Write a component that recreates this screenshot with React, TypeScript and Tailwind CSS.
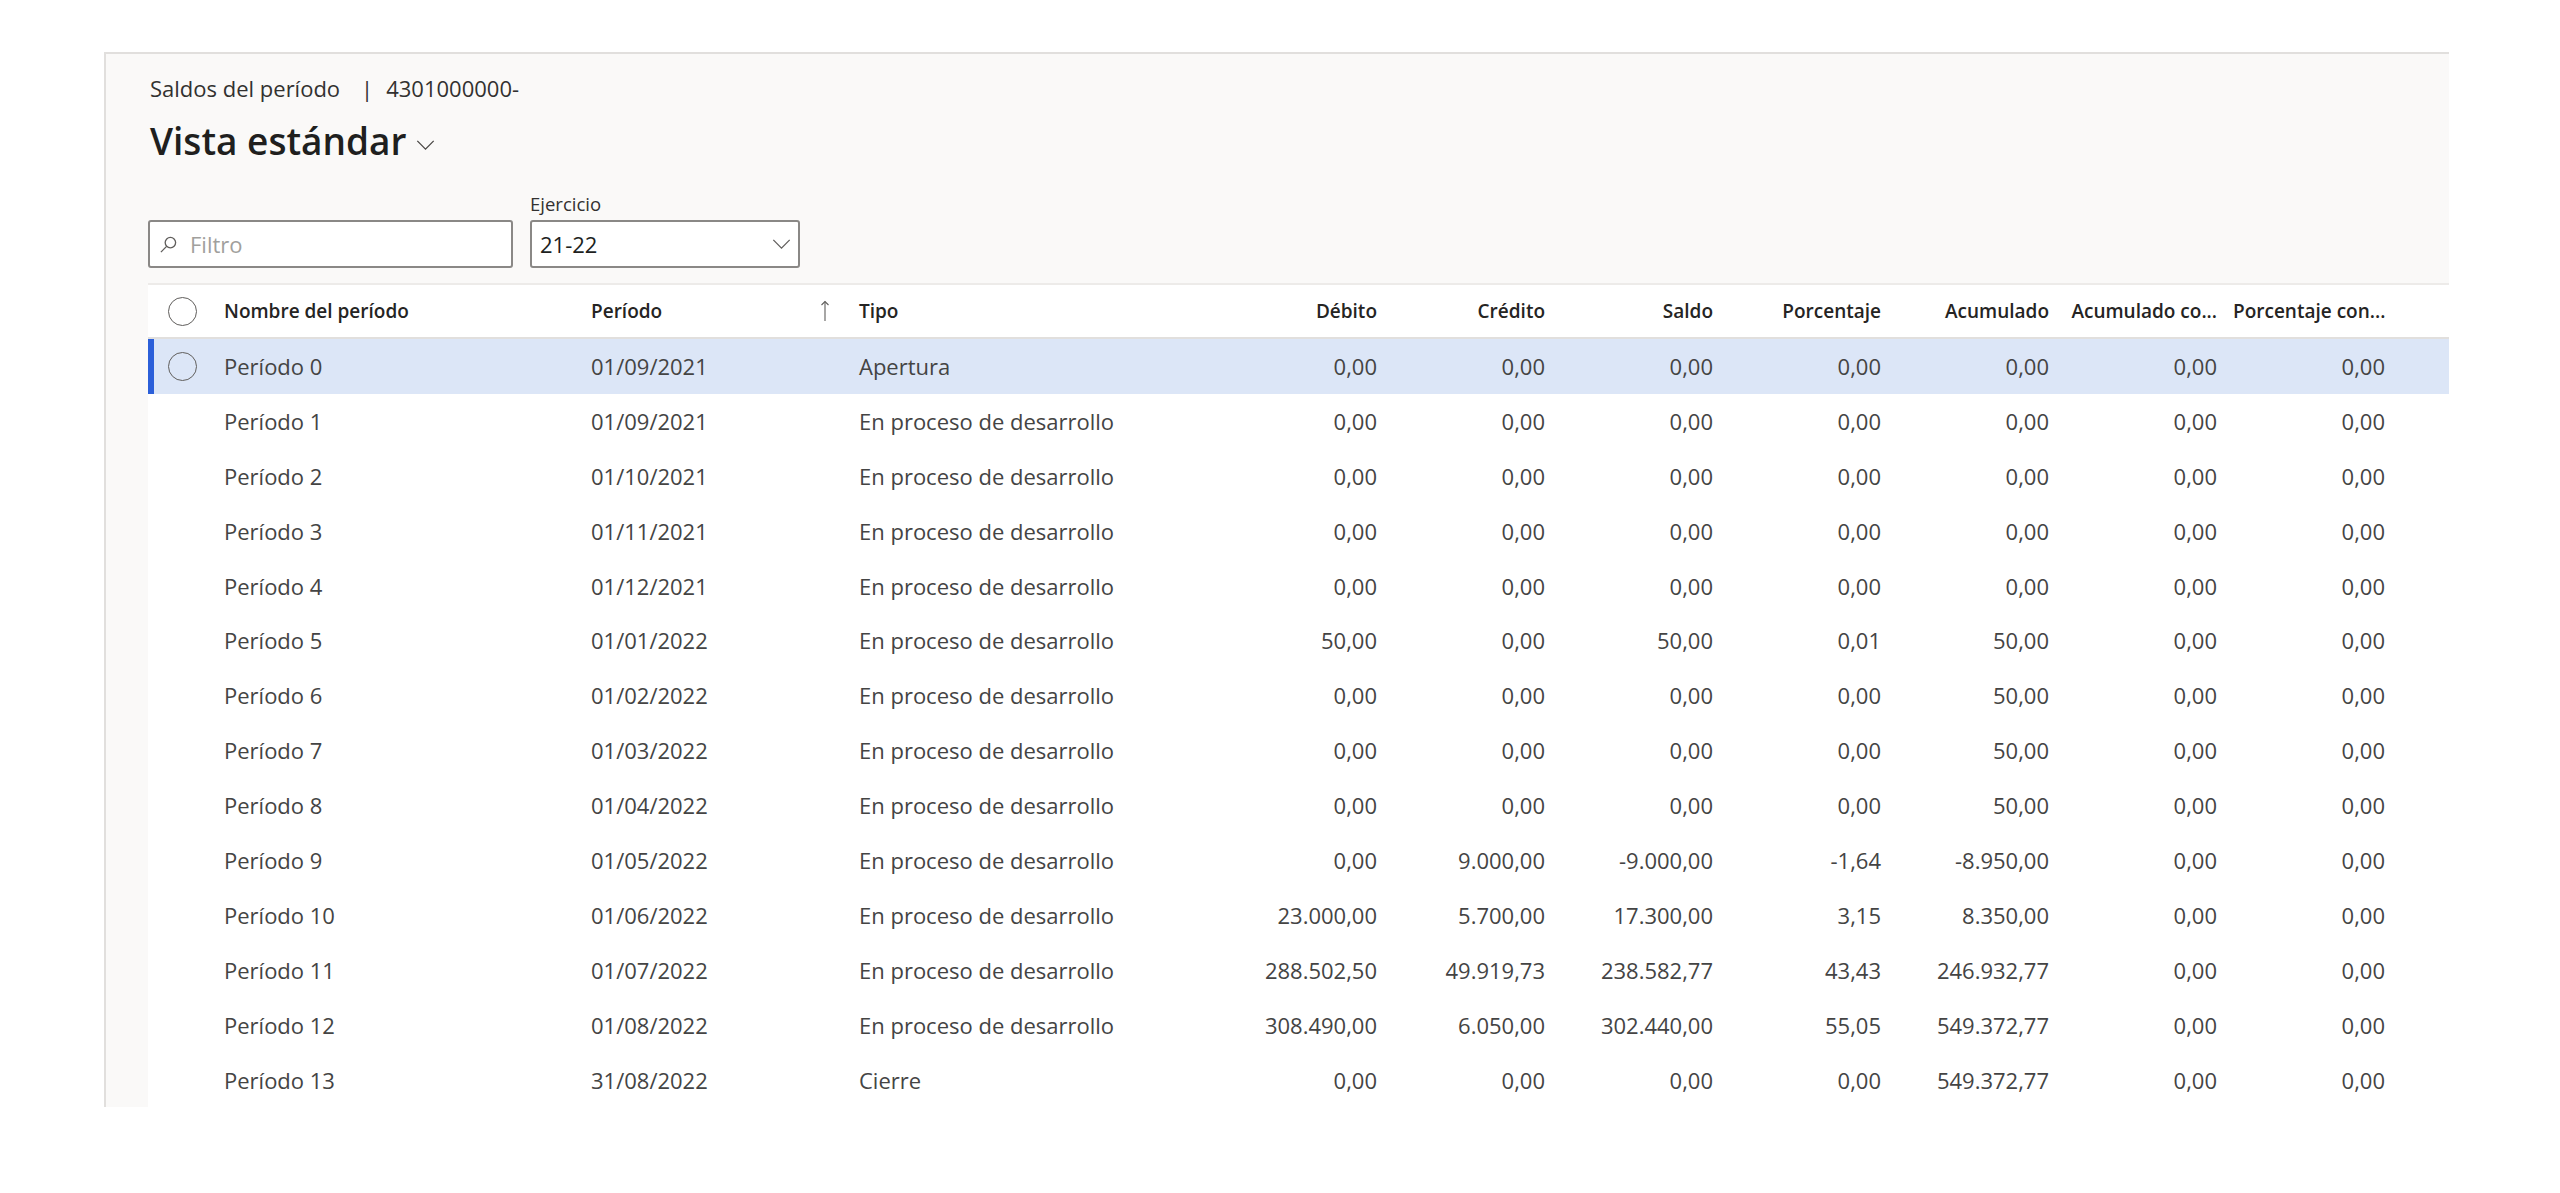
import React from "react";

type Row = {
  name: string;
  date: string;
  type: string;
  values: string[];
};

const Z = "0,00";

const rows: Row[] = [
  { name: "Período 0", date: "01/09/2021", type: "Apertura", values: [Z, Z, Z, Z, Z, Z, Z] },
  { name: "Período 1", date: "01/09/2021", type: "En proceso de desarrollo", values: [Z, Z, Z, Z, Z, Z, Z] },
  { name: "Período 2", date: "01/10/2021", type: "En proceso de desarrollo", values: [Z, Z, Z, Z, Z, Z, Z] },
  { name: "Período 3", date: "01/11/2021", type: "En proceso de desarrollo", values: [Z, Z, Z, Z, Z, Z, Z] },
  { name: "Período 4", date: "01/12/2021", type: "En proceso de desarrollo", values: [Z, Z, Z, Z, Z, Z, Z] },
  { name: "Período 5", date: "01/01/2022", type: "En proceso de desarrollo", values: ["50,00", Z, "50,00", "0,01", "50,00", Z, Z] },
  { name: "Período 6", date: "01/02/2022", type: "En proceso de desarrollo", values: [Z, Z, Z, Z, "50,00", Z, Z] },
  { name: "Período 7", date: "01/03/2022", type: "En proceso de desarrollo", values: [Z, Z, Z, Z, "50,00", Z, Z] },
  { name: "Período 8", date: "01/04/2022", type: "En proceso de desarrollo", values: [Z, Z, Z, Z, "50,00", Z, Z] },
  { name: "Período 9", date: "01/05/2022", type: "En proceso de desarrollo", values: [Z, "9.000,00", "-9.000,00", "-1,64", "-8.950,00", Z, Z] },
  { name: "Período 10", date: "01/06/2022", type: "En proceso de desarrollo", values: ["23.000,00", "5.700,00", "17.300,00", "3,15", "8.350,00", Z, Z] },
  { name: "Período 11", date: "01/07/2022", type: "En proceso de desarrollo", values: ["288.502,50", "49.919,73", "238.582,77", "43,43", "246.932,77", Z, Z] },
  { name: "Período 12", date: "01/08/2022", type: "En proceso de desarrollo", values: ["308.490,00", "6.050,00", "302.440,00", "55,05", "549.372,77", Z, Z] },
  { name: "Período 13", date: "31/08/2022", type: "Cierre", values: [Z, Z, Z, Z, "549.372,77", Z, Z] },
];

const numericHeaders = ["Débito", "Crédito", "Saldo", "Porcentaje", "Acumulado", "Acumulado co...", "Porcentaje con..."];

const Circle = () => (
  <div className="h-[29px] w-[29px] rounded-full border-[1.5px] border-[#605e5c]" />
);

const Chevron = ({ className }: { className?: string }) => (
  <svg viewBox="0 0 20 11" className={className} fill="none" stroke="currentColor" strokeWidth="1.4">
    <polyline points="1,1 10,10 19,1" />
  </svg>
);

export default function App() {
  return (
    <div className="min-h-screen w-[2560px] bg-white pt-[52px] font-['Segoe_UI','Open_Sans',sans-serif] text-[#323130]">
      <div className="ml-[104px] w-[2345px] border-l-2 border-t-2 border-[#e1dfdd] bg-[#faf9f8]">
        <div className="pl-[42px]">
          {/* encabezado */}
          <div className="flex items-center pt-[19px] text-[22px] leading-[30px] text-[#323130]">
            <span className="ml-[2px]">Saldos del período</span>
            <span className="ml-[21px] mr-[13px]">|</span>
            <span>4301000000-</span>
          </div>
          <div className="mt-[14px] flex items-center">
            <h1 className="ml-[2px] text-[37px] font-semibold leading-[48px] text-[#201f1e]">Vista estándar</h1>
            <Chevron className="ml-[9px] mt-[8px] h-[10px] w-[19px] text-[#484644]" />
          </div>

          {/* filtros */}
          <div className="mt-[27px] flex items-end gap-[17px]">
            <div className="flex h-[48px] w-[365px] items-center rounded-[3px] border-2 border-[#8a8886] bg-white pl-[9px]">
              <svg viewBox="0 0 20 20" className="h-[19px] w-[19px]" fill="none" stroke="#605e5c" strokeWidth="1.4">
                <circle cx="12" cy="8" r="5.5" />
                <line x1="8" y1="12" x2="2" y2="18" />
              </svg>
              <span className="ml-[12px] text-[22px] text-[#a19f9d]">Filtro</span>
            </div>
            <div className="flex flex-col">
              <span className="mb-[4px] text-[18.5px] leading-[24px] text-[#323130]">Ejercicio</span>
              <div className="flex h-[48px] w-[270px] items-center justify-between rounded-[3px] border-2 border-[#8a8886] bg-white pl-[8px] pr-[7px]">
                <span className="text-[22px] text-[#201f1e]">21-22</span>
                <Chevron className="h-[10px] w-[19px] text-[#605e5c]" />
              </div>
            </div>
          </div>

          {/* tabla */}
          <div className="mt-[15px] bg-white">
            <div className="flex h-[56px] items-center border-y-2 border-t-[#edebe9] border-b-[#e1dfdd] text-[19px] font-semibold text-[#252423]">
              <div className="flex w-[68px] pl-[20px]">
                <Circle />
              </div>
              <div className="w-[367px] px-[8px]">Nombre del período</div>
              <div className="flex w-[268px] items-center justify-between pl-[8px] pr-[21px]">
                <span>Período</span>
                <svg viewBox="0 0 10 22" className="h-[22px] w-[10px]" fill="none" stroke="#605e5c" strokeWidth="1.1">
                  <line x1="5" y1="1.5" x2="5" y2="21" />
                  <polyline points="1.5,5 5,1.5 8.5,5" />
                </svg>
              </div>
              <div className="w-[366px] px-[8px]">Tipo</div>
              {numericHeaders.map((h) => (
                <div key={h} className="w-[168px] whitespace-nowrap px-[8px] text-right">
                  {h}
                </div>
              ))}
            </div>

            {rows.map((r, i) => {
              const selected = i === 0;
              return (
                <div
                  key={r.name}
                  className={
                    selected
                      ? "flex h-[54.9px] items-center bg-[#dce6f7] text-[22px] text-[#444444]"
                      : "flex h-[54.9px] items-center text-[22px] text-[#444444]"
                  }
                >
                  <div
                    className={
                      selected
                        ? "flex h-full w-[68px] items-center border-l-[6px] border-[#2b5fd9] pl-[14px]"
                        : "flex h-full w-[68px] items-center border-l-[6px] border-transparent pl-[14px]"
                    }
                  >
                    {selected && <Circle />}
                  </div>
                  <div className="w-[367px] px-[8px]">{r.name}</div>
                  <div className="w-[268px] px-[8px]">{r.date}</div>
                  <div className="w-[366px] px-[8px]">{r.type}</div>
                  {r.values.map((v, j) => (
                    <div key={j} className="w-[168px] px-[8px] text-right">
                      {v}
                    </div>
                  ))}
                </div>
              );
            })}
          </div>
        </div>
      </div>
    </div>
  );
}
